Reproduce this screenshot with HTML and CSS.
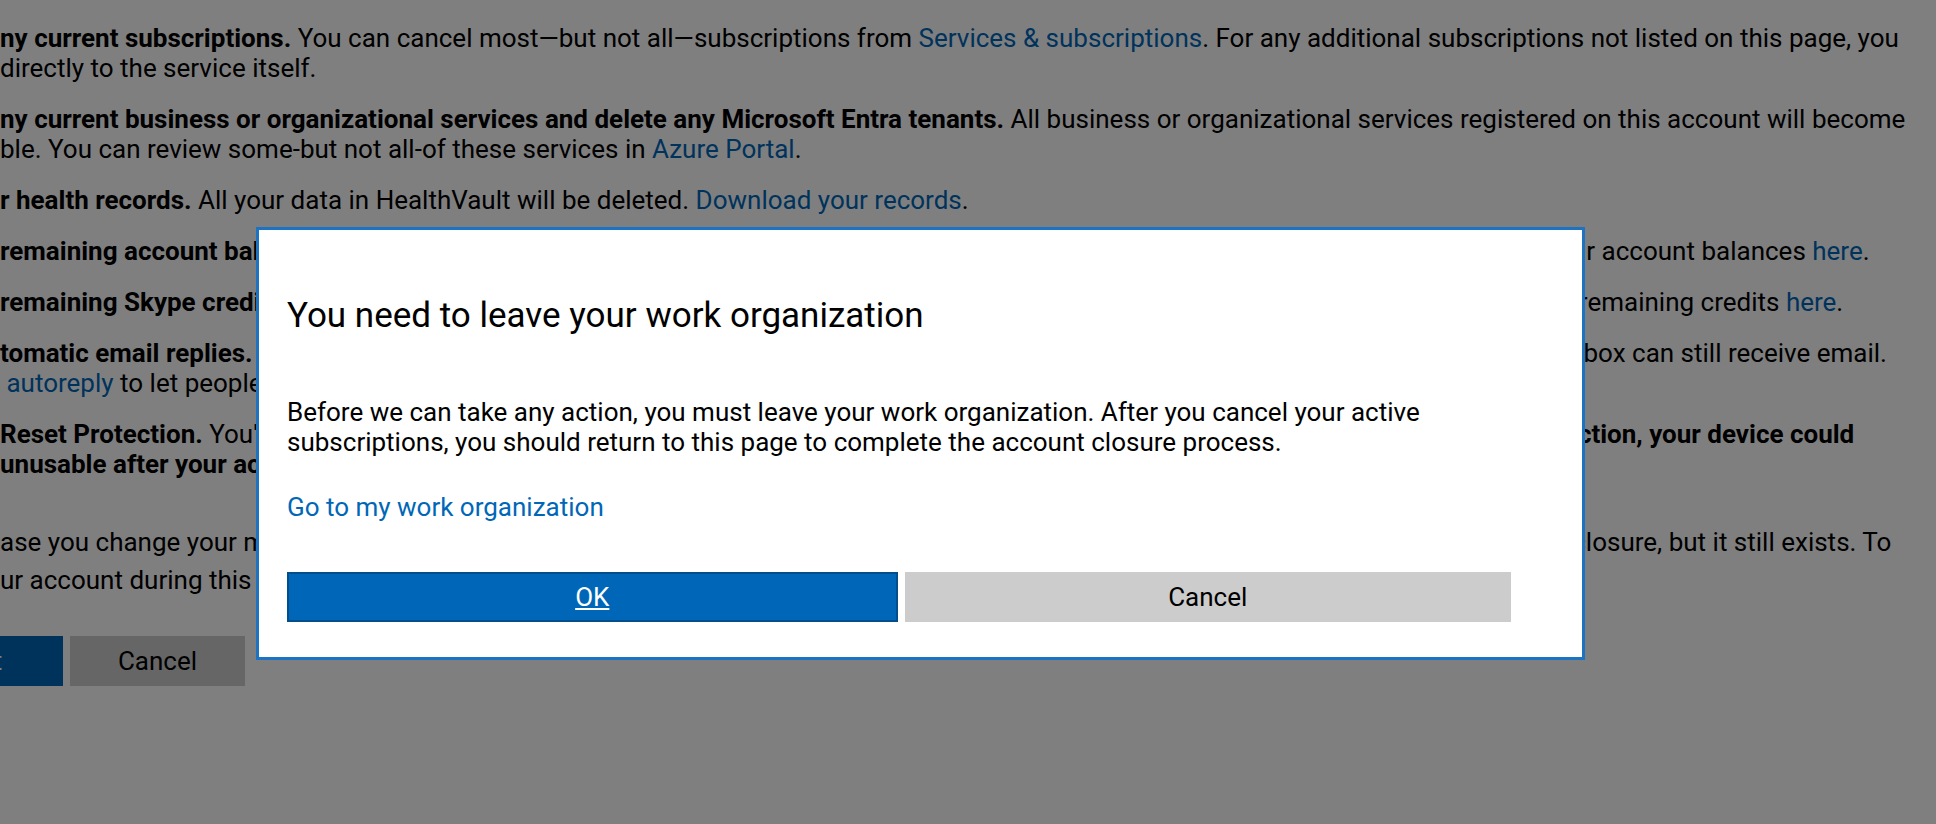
FILE: index.html
```html
<!DOCTYPE html>
<html lang="en">
<head>
  <meta charset="UTF-8">
  <meta name="viewport" content="width=device-width, initial-scale=1.0">
  <title>Close your account</title>
  <link rel="stylesheet" href="styles.css">
</head>
<body>
  <!-- Сторінка під діалогом -->
  <main class="page">
    <p class="item"><b>ny current subscriptions.</b> You can cancel most—but not all—subscriptions from <a href="#">Services &amp; subscriptions</a>. For any additional subscriptions not listed on this page, you<br>directly to the service itself.</p>
    <p class="item"><b>ny current business or organizational services and delete any Microsoft Entra tenants.</b> All business or organizational services registered on this account will become<br>ble. You can review some-but not all-of these services in <a href="#">Azure Portal</a>.</p>
    <p class="item"><b>r health records.</b> All your data in HealthVault will be deleted. <a href="#">Download your records</a>.</p>
    <p class="item"><b>remaining account balance.</b> Any money left in your Microsoft account will be lost when the account is closed for good. You can check you<span>r account balances <a href="#">here</a>.</span></p>
    <p class="item"><b>remaining Skype credit.</b> Any Skype credits left on this account will be lost once this account is closed for good. You can check all of your <span>remaining credits <a href="#">here</a>.</span></p>
    <p class="item"><b>tomatic email replies.</b> During the sixty-day waiting period before your Microsoft account is permanently closed, your Outlook.com email in<span>box can still receive email.</span><br>&nbsp;<a href="#">autoreply</a> to let people know about your new email address.</p>
    <p class="item"><b>Reset Protection.</b> You'll need to turn off Reset Protection on all of your Windows phones and tablets first. <b>If you don't turn off Reset Prote<span>ction, your device could</span><br>unusable after your account is closed.</b></p>
    <p class="note">ase you change your mind, we'll wait for 60 days before we permanently close your account. During this time, your account is marked for cl<span>osure, but it still exists. To</span><br>ur account during this time, just sign in again.</p>
    <div class="actions">
      <button class="btn btn-primary">Next</button>
      <button class="btn btn-secondary">Cancel</button>
    </div>
  </main>

  <div class="overlay"></div>

  <!-- Діалог -->
  <div class="dialog" role="dialog">
    <h2 class="dialog-title">You need to leave your work organization</h2>
    <p class="dialog-text">Before we can take any action, you must leave your work organization. After you cancel your active<br>subscriptions, you should return to this page to complete the account closure process.</p>
    <a class="dialog-link" href="#">Go to my work organization</a>
    <div class="dialog-buttons">
      <button class="btn btn-primary btn-focus"><u>OK</u></button>
      <button class="btn btn-secondary">Cancel</button>
    </div>
  </div>
</body>
</html>
```

FILE: styles.css
```css
body {
  margin: 0;
  font-family: Roboto, "Noto Sans", Arial, sans-serif;
  font-size: 26px;
  line-height: 30px;
  color: #000;
  background: #fff;
  overflow: hidden;
}
a {
  color: #0067b8;
  text-decoration: none;
}
.page {
  padding: 23px 0 0 0;
  white-space: nowrap;
}
.item {
  margin: 0 0 21px;
}
.note {
  margin: 44px 0 37px;
  line-height: 38px;
}
.actions {
  display: flex;
  gap: 7px;
}
.actions .btn-primary {
  margin-left: -112px;
}
.btn {
  font-family: inherit;
  font-size: 26px;
  height: 50px;
  width: 175px;
  border: none;
  padding: 0;
}
.btn-primary {
  background: #0067b8;
  color: #fff;
}
.btn-secondary {
  background: #ccc;
  color: #000;
}
.overlay {
  position: fixed;
  inset: 0;
  background: rgba(0, 0, 0, 0.5);
}
.dialog {
  position: fixed;
  left: 256px;
  top: 227px;
  width: 1295px;
  height: 427px;
  border: 3px solid #1b73c2;
  background: #fff;
  padding: 0 0 0 28px;
  white-space: nowrap;
}
.dialog-title {
  font-size: 35px;
  font-weight: 400;
  line-height: 40px;
  margin: 66px 0 0;
}
.dialog-text {
  margin: 61px 0 0;
}
.dialog-link {
  display: inline-block;
  margin-top: 35px;
}
.dialog-buttons {
  display: flex;
  gap: 7px;
  margin-top: 50px;
  width: 1224px;
}
.dialog-buttons .btn {
  flex: 1;
}
.btn-focus {
  border: 2px solid #004f8c;
}
```
